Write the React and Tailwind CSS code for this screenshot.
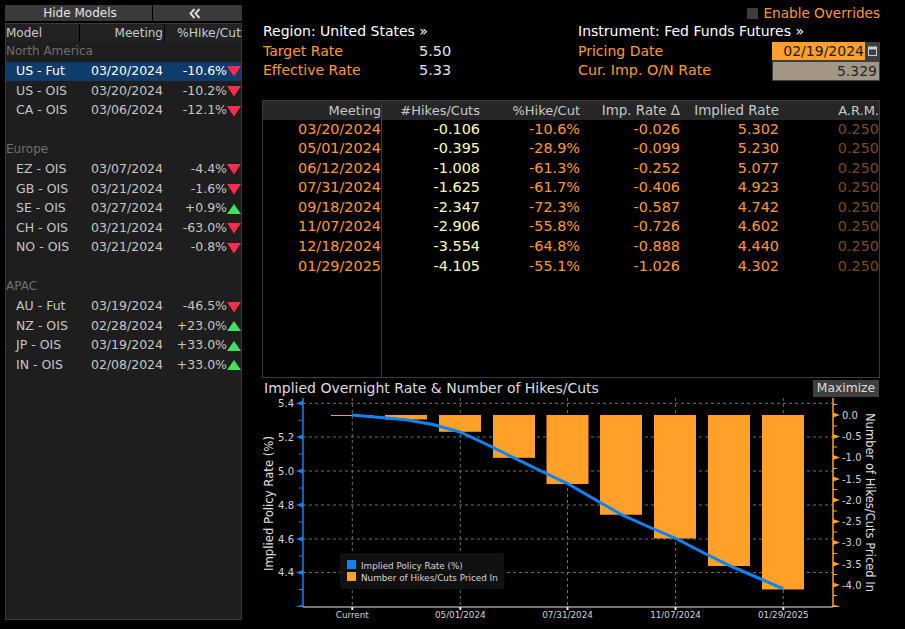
import React from "react";

const regions = [
  { name: "North America", rows: [
    { model: "US - Fut", date: "03/20/2024", pct: "-10.6%", up: false, selected: true },
    { model: "US - OIS", date: "03/20/2024", pct: "-10.2%", up: false },
    { model: "CA - OIS", date: "03/06/2024", pct: "-12.1%", up: false },
  ]},
  { name: "Europe", rows: [
    { model: "EZ - OIS", date: "03/07/2024", pct: "-4.4%", up: false },
    { model: "GB - OIS", date: "03/21/2024", pct: "-1.6%", up: false },
    { model: "SE - OIS", date: "03/27/2024", pct: "+0.9%", up: true },
    { model: "CH - OIS", date: "03/21/2024", pct: "-63.0%", up: false },
    { model: "NO - OIS", date: "03/21/2024", pct: "-0.8%", up: false },
  ]},
  { name: "APAC", rows: [
    { model: "AU - Fut", date: "03/19/2024", pct: "-46.5%", up: false },
    { model: "NZ - OIS", date: "02/28/2024", pct: "+23.0%", up: true },
    { model: "JP - OIS", date: "03/19/2024", pct: "+33.0%", up: true },
    { model: "IN - OIS", date: "02/08/2024", pct: "+33.0%", up: true },
  ]},
];

const meetings = [
  ["03/20/2024", "-0.106", "-10.6%", "-0.026", "5.302", "0.250"],
  ["05/01/2024", "-0.395", "-28.9%", "-0.099", "5.230", "0.250"],
  ["06/12/2024", "-1.008", "-61.3%", "-0.252", "5.077", "0.250"],
  ["07/31/2024", "-1.625", "-61.7%", "-0.406", "4.923", "0.250"],
  ["09/18/2024", "-2.347", "-72.3%", "-0.587", "4.742", "0.250"],
  ["11/07/2024", "-2.906", "-55.8%", "-0.726", "4.602", "0.250"],
  ["12/18/2024", "-3.554", "-64.8%", "-0.888", "4.440", "0.250"],
  ["01/29/2025", "-4.105", "-55.1%", "-1.026", "4.302", "0.250"],
];

const tableCols = "grid grid-cols-[118px_99px_100px_100px_99px_100px]";

function Arrow({ up }) {
  return (
    <svg width="14" height="12" viewBox="0 0 14 12" className="shrink-0">
      {up ? <polygon points="7,1 14,11 0,11" fill="#3ee25f" /> : <polygon points="0,1 14,1 7,11.5" fill="#ff2d4b" />}
    </svg>
  );
}

function ModelsPanel() {
  return (
    <div className="w-[237px] ml-[5px] flex flex-col">
      <div className="flex h-[16px] mb-[2px] text-[12px] leading-[16px] text-[#e4e4e4]">
        <div className="w-[148px] bg-[#3a3a3a] border-r border-black text-center pl-[3px]">Hide Models</div>
        <div className="flex-1 bg-[#3a3a3a] flex items-center justify-center pr-[6px]">
          <svg width="12" height="11" viewBox="0 0 12 11" fill="none" stroke="#d8d8d8" strokeWidth="2">
            <path d="M5.5 1 L1.5 5.5 L5.5 10 M10.5 1 L6.5 5.5 L10.5 10" />
          </svg>
        </div>
      </div>
      <div className="h-[597px] bg-[#1e1e1e] border border-[#3a3a3a] text-[12.5px]">
        <div className="flex h-[18px] bg-[#222] text-[12px] leading-[18px] text-[#c9c9c9]">
          <div className="w-[74px] border-r border-black">Model</div>
          <div className="w-[85px] border-r border-black text-right pr-[1px]">Meeting</div>
          <div className="flex-1 text-right text-[12.3px] whitespace-nowrap">%Hike/Cut</div>
        </div>
        {regions.map((region) => (
          <div key={region.name} className="mb-[19.6px]">
            <div className="h-[19.6px] text-[12px] leading-[19px] text-[#6f6f6f]">{region.name}</div>
            {region.rows.map((row) => (
              <div
                key={row.model}
                className={"flex items-center h-[19.6px] " + (row.selected ? "bg-[#0f3d6b] text-white" : "text-[#c6c6c6]")}
              >
                <div className="w-[74px] pl-[10px]">{row.model}</div>
                <div className="w-[83px] text-right">{row.date}</div>
                <div className="w-[64px] text-right">{row.pct}</div>
                <Arrow up={row.up} />
              </div>
            ))}
          </div>
        ))}
      </div>
    </div>
  );
}

function InfoBlock() {
  return (
    <div className="flex h-[60px] text-[14px] leading-[19.6px]">
      <div className="w-[316px] pl-[1px]">
        <div className="text-white">Region: United States »</div>
        <div className="flex text-[#ff9a28]">
          <span className="w-[156px]">Target Rate</span>
          <span className="text-[#dfe6f0] text-[14.5px]">5.50</span>
        </div>
        <div className="flex text-[#ff9a28]">
          <span className="w-[156px]">Effective Rate</span>
          <span className="text-[#dfe6f0] text-[14.5px]">5.33</span>
        </div>
      </div>
      <div className="flex-1">
        <div className="text-white">Instrument: Fed Funds Futures »</div>
        <div className="flex text-[#ff9a28]">
          <span className="w-[194px]">Pricing Date</span>
          <div className="flex w-[108px] h-[19px] bg-[#3f3f3f]">
            <div className="w-[93px] h-[18px] bg-[#ff9f2d] text-[#1a1a1a] text-right pr-[1px] leading-[18px]">02/19/2024</div>
            <div className="flex-1 flex items-center justify-center">
              <svg width="9" height="10" viewBox="0 0 9 10" fill="none" stroke="#cfcfcf">
                <rect x="0.5" y="1.5" width="8" height="8" />
                <rect x="0.5" y="1" width="8" height="2" fill="#cfcfcf" />
              </svg>
            </div>
          </div>
        </div>
        <div className="flex text-[#ff9a28]">
          <span className="w-[194px] text-[14.3px] whitespace-nowrap">Cur. Imp. O/N Rate</span>
          <div className="w-[108px] h-[20px] bg-[#a39685] border border-[#3f3f3f] text-[#1d2736] text-right pr-[2px] leading-[18px]">5.329</div>
        </div>
      </div>
    </div>
  );
}

function MeetingTable() {
  return (
    <div className="relative mt-[18px] w-[618px] h-[278px] border border-[#3c3c3c]">
      <div className="absolute left-[118px] top-0 bottom-0 w-px bg-[#3c3c3c]" />
      <div className={tableCols + " h-[18.5px] bg-[#262626] text-[13px] leading-[19px] text-[#c9c9c9] text-right"}>
        <div>Meeting</div>
        <div>#Hikes/Cuts</div>
        <div>%Hike/Cut</div>
        <div className="text-[13.4px]">Imp. Rate Δ</div>
        <div className="text-[13.4px]">Implied Rate</div>
        <div>A.R.M.</div>
      </div>
      {meetings.map((m) => (
        <div key={m[0]} className={tableCols + " h-[19.6px] text-[14.4px] leading-[19.6px] text-right"}>
          <div className="text-[#ff9a28]">{m[0]}</div>
          <div className="text-[#ffffb4]">{m[1]}</div>
          <div className="text-[#ff9a28]">{m[2]}</div>
          <div className="text-[#ff9a28]">{m[3]}</div>
          <div className="text-[#ff9a28]">{m[4]}</div>
          <div className="text-[#7a4c18]">{m[5]}</div>
        </div>
      ))}
    </div>
  );
}

// chart is drawn in page coordinates, viewBox starts where the svg sits on the page
const AX_FONT = "'DejaVu Sans', sans-serif";
const grid = "#6e6e6e";
const leftTicks = [
  [403.3, "5.4"], [437, "5.2"], [471, "5.0"], [505, "4.8"], [539, "4.6"], [572.5, "4.4"],
];
const rightTicks = [
  [415, "0.0"], [436.5, "-0.5"], [457.5, "-1.0"], [479, "-1.5"], [500, "-2.0"],
  [521.5, "-2.5"], [542.5, "-3.0"], [564, "-3.5"], [585, "-4.0"],
];
const gridX = [352.3, 460.3, 567.5, 675.5, 783.3];
const bars = [
  [385, 0.106], [439, 0.395], [493, 1.008], [546.5, 1.625],
  [600, 2.347], [654, 2.906], [708, 3.554], [762, 4.105],
];
const xLabels = [[352.3, "Current"], [460.3, "05/01/2024"], [567.5, "07/31/2024"], [675.5, "11/07/2024"], [783.3, "01/29/2025"]];

function Chart() {
  return (
    <svg width="643" height="231" viewBox="262 398 643 231" className="block" style={{ fontFamily: AX_FONT }}>
      {leftTicks.map(([y]) => (
        <line key={y} x1="303" x2="833" y1={y} y2={y} stroke={grid} strokeDasharray="3 3" />
      ))}
      {gridX.map((x) => (
        <line key={x} x1={x} x2={x} y1="398" y2="607" stroke={grid} strokeDasharray="3 3" />
      ))}
      <rect x="331" y="415" width="42" height="1" fill="#ffa028" />
      {bars.map(([x, v]) => (
        <rect key={x} x={x} y="415" width="42" height={v * 42.5} fill="#ffa028" />
      ))}
      <polyline
        points="352,415 406,419.8 433,424.5 460,432 487,444.5 514,457.8 541,471 568,483.8 595,499.5 621,514.3 648,526.5 675,538 702,552 729,565.3 756,577 783,588.6"
        fill="none" stroke="#0a84ff" strokeWidth="3"
      />

      {/* left axis */}
      <line x1="303" x2="303" y1="398" y2="607" stroke="#0a84ff" strokeWidth="1.5" />
      {leftTicks.map(([y, t]) => (
        <g key={t}>
          <polygon points={`296,${y} 303,${y - 2.5} 303,${y + 2.5}`} fill="#0a84ff" />
          <line x1="299" x2="303" y1={y + 17} y2={y + 17} stroke="#0a84ff" />
          <text x="294" y={y + 3.5} textAnchor="end" fontSize="10" fill="#d4d4d4">{t}</text>
        </g>
      ))}
      <polygon points="295,607 303,604.5 303,607" fill="#0a84ff" />

      {/* right axis */}
      <line x1="833" x2="833" y1="398" y2="607" stroke="#ffa028" strokeWidth="1.5" />
      {rightTicks.map(([y, t]) => (
        <g key={t}>
          <polygon points={`840,${y} 833,${y - 2.5} 833,${y + 2.5}`} fill="#ffa028" />
          <line x1="833" x2="837" y1={y - 10.5} y2={y - 10.5} stroke="#ffa028" />
          <text x="842" y={y + 3.5} fontSize="10" fill="#d4d4d4">{t}</text>
        </g>
      ))}
      <line x1="833" x2="837" y1="595.5" y2="595.5" stroke="#ffa028" />
      <polygon points="841,607 833,604.5 833,607" fill="#ffa028" />

      {/* bottom axis */}
      <line x1="303" x2="833" y1="607" y2="607" stroke="#e8e8e8" />
      {xLabels.map(([x, t]) => (
        <g key={t}>
          <rect x={x - 1} y="607" width="2" height="3" fill="#e8e8e8" />
          <text x={x} y="618" textAnchor="middle" fontSize="8.8" fill="#d4d4d4">{t}</text>
        </g>
      ))}

      <text transform="translate(273 503.5) rotate(-90)" textAnchor="middle" fontSize="13" textLength="135" lengthAdjust="spacingAndGlyphs" fill="#e0e0e0">Implied Policy Rate (%)</text>
      <text transform="translate(866 502.5) rotate(90)" textAnchor="middle" fontSize="13" textLength="179" lengthAdjust="spacingAndGlyphs" fill="#e0e0e0">Number of Hikes/Cuts Priced In</text>

      {/* legend */}
      <rect x="340" y="553" width="164" height="36" rx="2" fill="#111" />
      <rect x="347" y="560" width="9" height="9" fill="#0a84ff" />
      <rect x="347" y="572" width="9" height="9" fill="#ffa028" />
      <text x="361" y="569" fontSize="8.8" fill="#d4d4d4">Implied Policy Rate (%)</text>
      <text x="361" y="581" fontSize="8.8" fill="#d4d4d4">Number of Hikes/Cuts Priced In</text>
    </svg>
  );
}

export default function App() {
  return (
    <div className="w-[905px] h-[629px] bg-black flex pt-[5px] overflow-hidden font-['DejaVu_Sans',sans-serif]">
      <ModelsPanel />
      <div className="ml-[20px] w-[643px] flex flex-col">
        <div className="w-[618px] h-[17px] flex items-center justify-end gap-[5px] text-[13.6px] text-[#ff9a28]">
          <div className="w-[11px] h-[11px] bg-[#3d3d3d]" />
          <span>Enable Overrides</span>
        </div>
        <InfoBlock />
        <MeetingTable />
        <div className="w-[618px] h-[20px] flex items-center justify-between text-[#dcdcdc]">
          <div className="pl-[2px] text-[14px]">Implied Overnight Rate &amp; Number of Hikes/Cuts</div>
          <div className="w-[66px] h-[17px] mr-[1px] mt-[1px] bg-[#3f3f3f] text-[12.3px] leading-[17px] text-center">Maximize</div>
        </div>
        <Chart />
      </div>
    </div>
  );
}
